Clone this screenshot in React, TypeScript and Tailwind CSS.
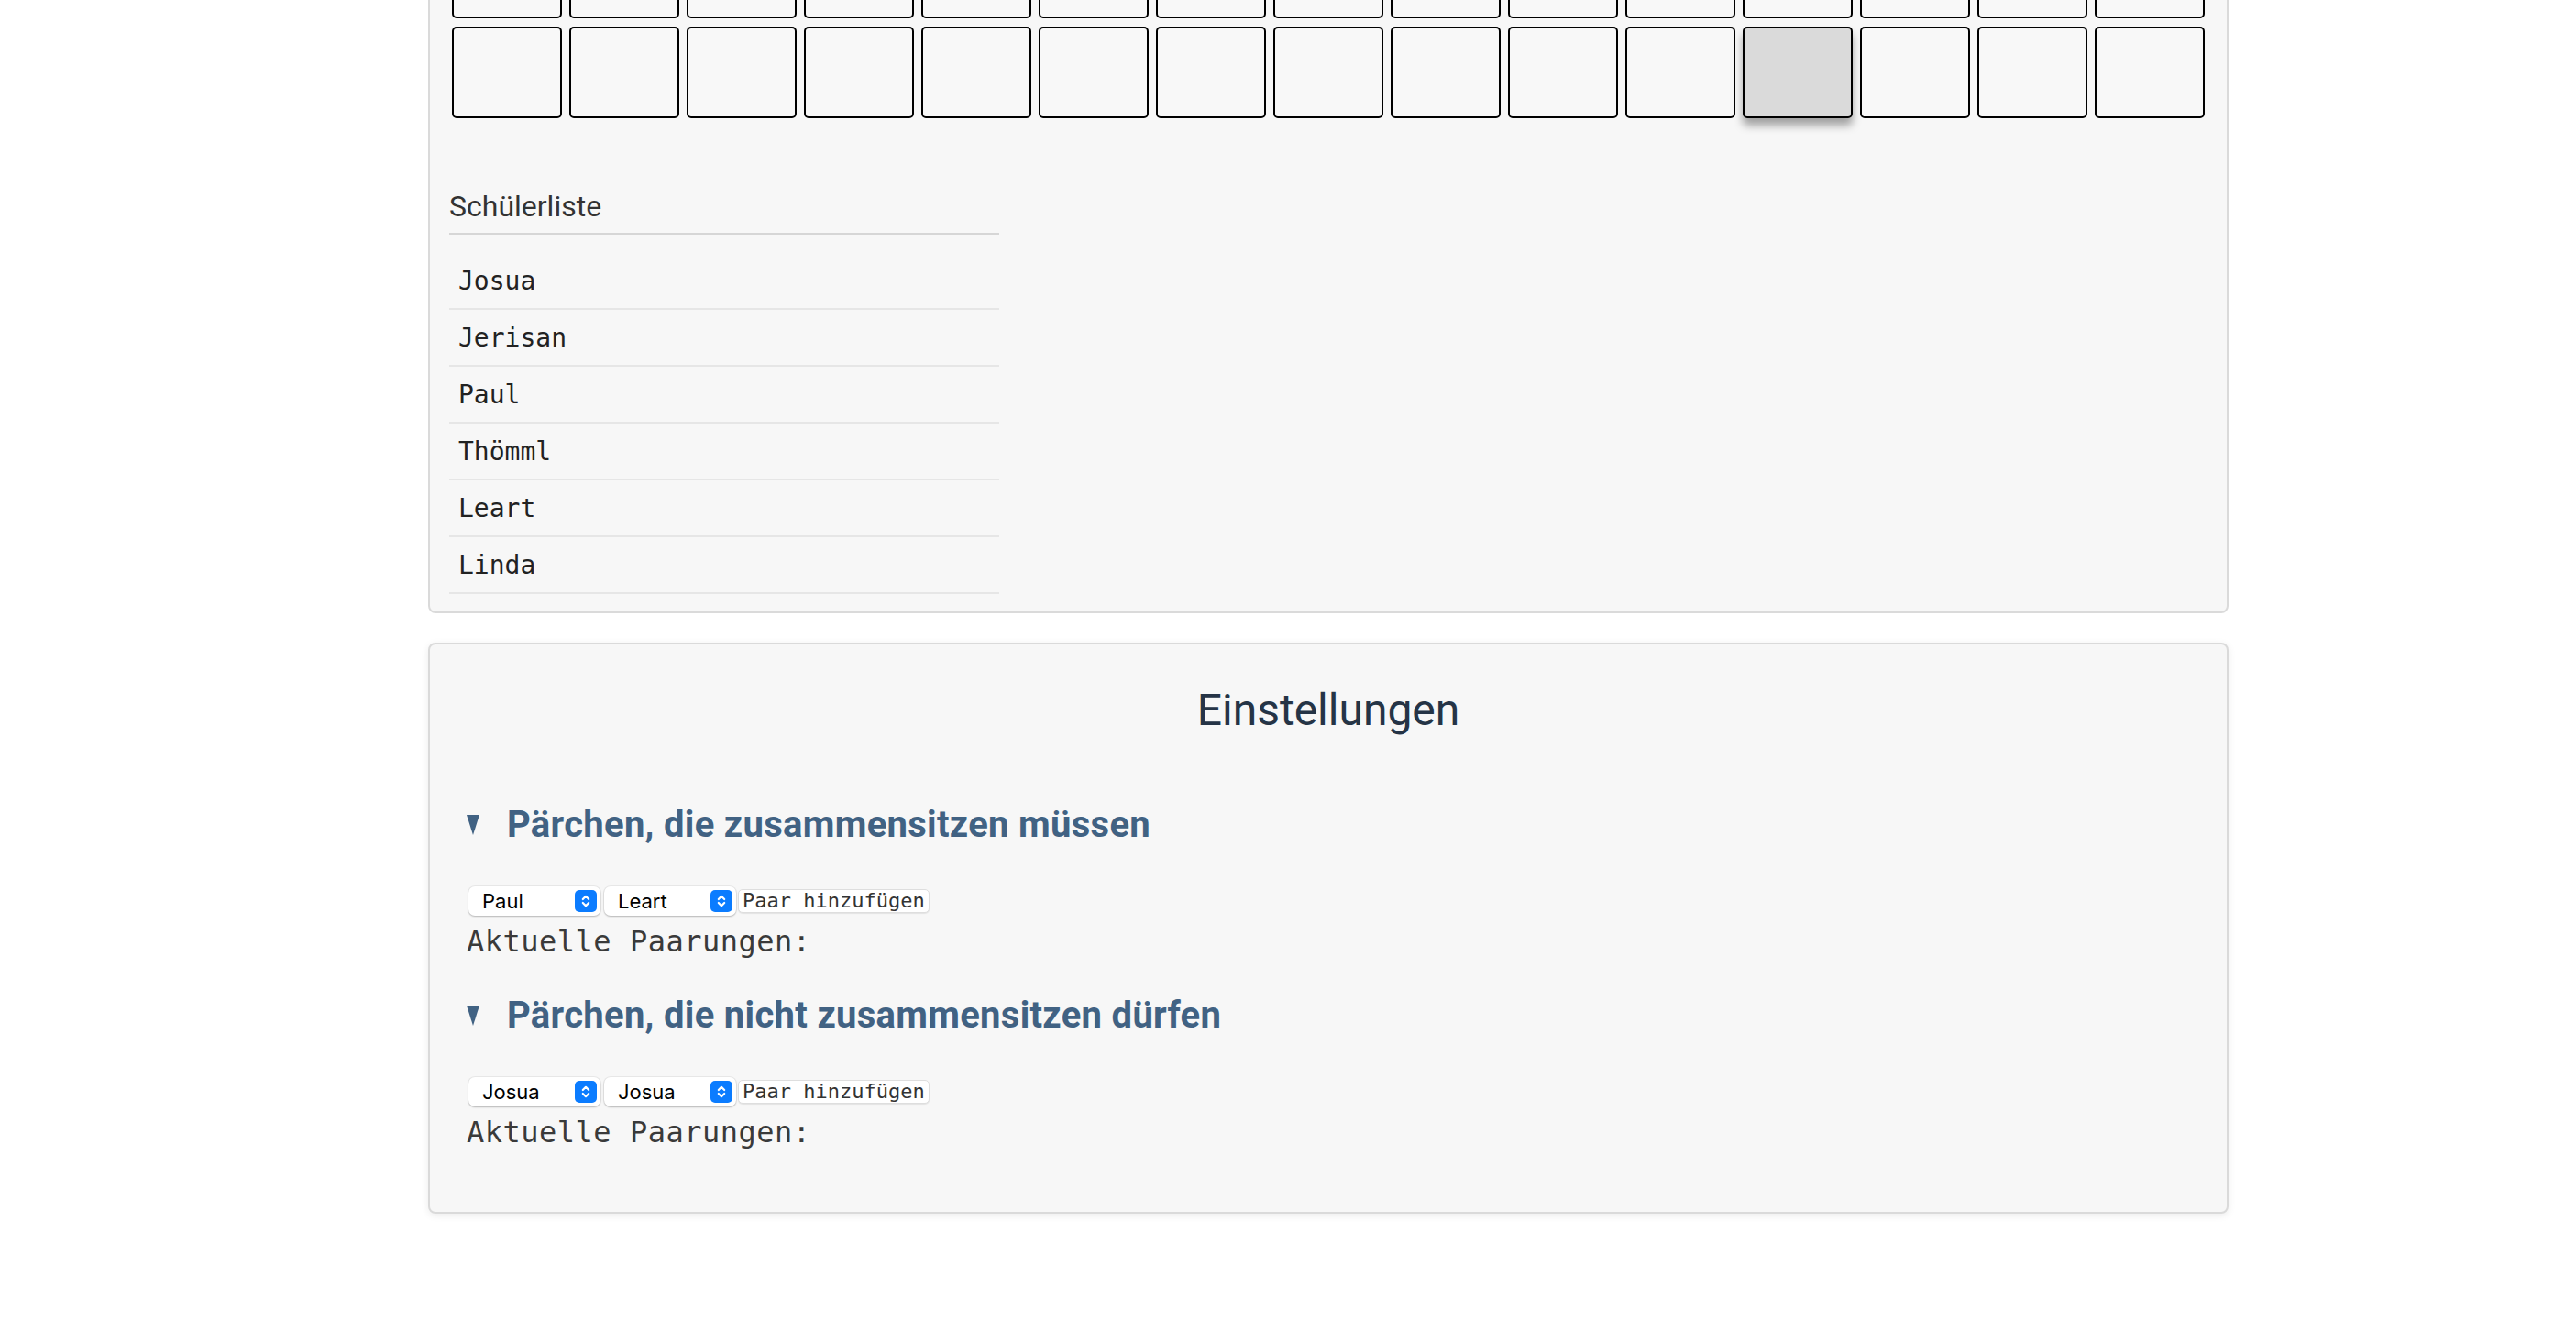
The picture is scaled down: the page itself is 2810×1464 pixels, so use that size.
import React from "react";

const names = ["Josua", "Jerisan", "Paul", "Thömml", "Leart", "Linda"];
const mono = { fontFamily: '"DejaVu Sans Mono", "Liberation Mono", monospace' };

function Triangle() {
  return (
    <svg width="14" height="22" viewBox="0 0 14 22" className="shrink-0">
      <polygon points="0,0 14,0 7,22" fill="#416283" />
    </svg>
  );
}

function Select({ value }: { value: string }) {
  return (
    <div className="flex h-[32px] w-[144px] items-center rounded-[7px] bg-white pl-[15px] text-[22px] text-black shadow-[0_0_0_1px_rgba(0,0,0,0.05),0_1px_2px_rgba(0,0,0,0.22)] font-['Inter',sans-serif]">
      <span>{value}</span>
      <div className="ml-auto mr-[4px] flex h-[24px] w-[24px] items-center justify-center rounded-[5px] bg-[#0b7cff]">
        <svg width="24" height="24" viewBox="0 0 24 24" fill="none" stroke="white" strokeWidth="2.2" strokeLinecap="round" strokeLinejoin="round">
          <path d="M8.8 10 L12 6.8 L15.2 10" />
          <path d="M8.8 14 L12 17.2 L15.2 14" />
        </svg>
      </div>
    </div>
  );
}

function PairBlock({ title, a, b }: { title: string; a: string; b: string }) {
  return (
    <div>
      <div className="flex h-[42px] items-center">
        <Triangle />
        <span className="ml-[30px] whitespace-nowrap text-[40px] font-bold leading-[42px] tracking-[0.3px] text-[#416283] font-['Roboto',sans-serif]">{title}</span>
      </div>
      <div className="ml-[2px] mt-[46px] flex h-[32px] items-center">
        <Select value={a} />
        <div className="ml-[4px]">
          <Select value={b} />
        </div>
        <div
          className="ml-[2px] h-[26px] rounded-[5px] border border-[#dedede] bg-white px-[4px] text-[22px] leading-[24px] text-[#333] shadow-[0_1px_1px_rgba(0,0,0,0.08)]"
          style={mono}
        >
          Paar hinzufügen
        </div>
      </div>
      <div className="mt-[4px] text-[32px] leading-[48px] tracking-[0.5px] text-[#3a3a3a]" style={mono}>
        Aktuelle Paarungen:
      </div>
    </div>
  );
}

export default function App() {
  const cells = Array.from({ length: 30 }, (_, i) => i);
  return (
    <div className="min-h-[1464px] w-full overflow-hidden bg-white">
      <div className="-mt-[106px] ml-[467px] w-[1964px] rounded-[8px] border-2 border-[#dadada] bg-[#f7f7f7] pb-[19px] pl-[21px] pr-[24px] pt-[24px]">
        <div className="grid grid-cols-[repeat(15,120px)] gap-x-[8px] gap-y-[9px] pl-[3px]">
          {cells.map((i) => (
            <div
              key={i}
              className={
                i === 26
                  ? "h-[100px] rounded-[5px] border-2 border-black bg-[#dadada] shadow-[0_8px_10px_rgba(0,0,0,0.35)]"
                  : "h-[100px] rounded-[5px] border-2 border-black bg-[#f8f8f8]"
              }
            />
          ))}
        </div>
        <div className="mt-[72px] w-[600px] border-b-2 border-[#d6d6d6] pb-[5px] text-[32px] leading-[48px] text-[#333] font-['Roboto',sans-serif]">
          Schülerliste
        </div>
        <div className="mt-[20px] w-[600px]">
          {names.map((n) => (
            <div key={n} className="h-[62px] border-b-2 border-[#e6e6e6] pl-[10px] text-[28px] leading-[62px] text-[#222]" style={mono}>
              {n}
            </div>
          ))}
        </div>
      </div>

      <div className="ml-[467px] mt-[32px] w-[1964px] rounded-[8px] border-2 border-[#dadada] bg-[#f7f7f7] pb-[63px] pt-[44px] shadow-[0_2px_8px_rgba(0,0,0,0.08)]">
        <h2 className="text-center text-[48px] leading-[56px] text-[#253446] font-['Roboto',sans-serif]">Einstellungen</h2>
        <div className="mt-[76px] pl-[40px]">
          <PairBlock title="Pärchen, die zusammensitzen müssen" a="Paul" b="Leart" />
          <div className="mt-[36px]">
            <PairBlock title="Pärchen, die nicht zusammensitzen dürfen" a="Josua" b="Josua" />
          </div>
        </div>
      </div>
    </div>
  );
}
